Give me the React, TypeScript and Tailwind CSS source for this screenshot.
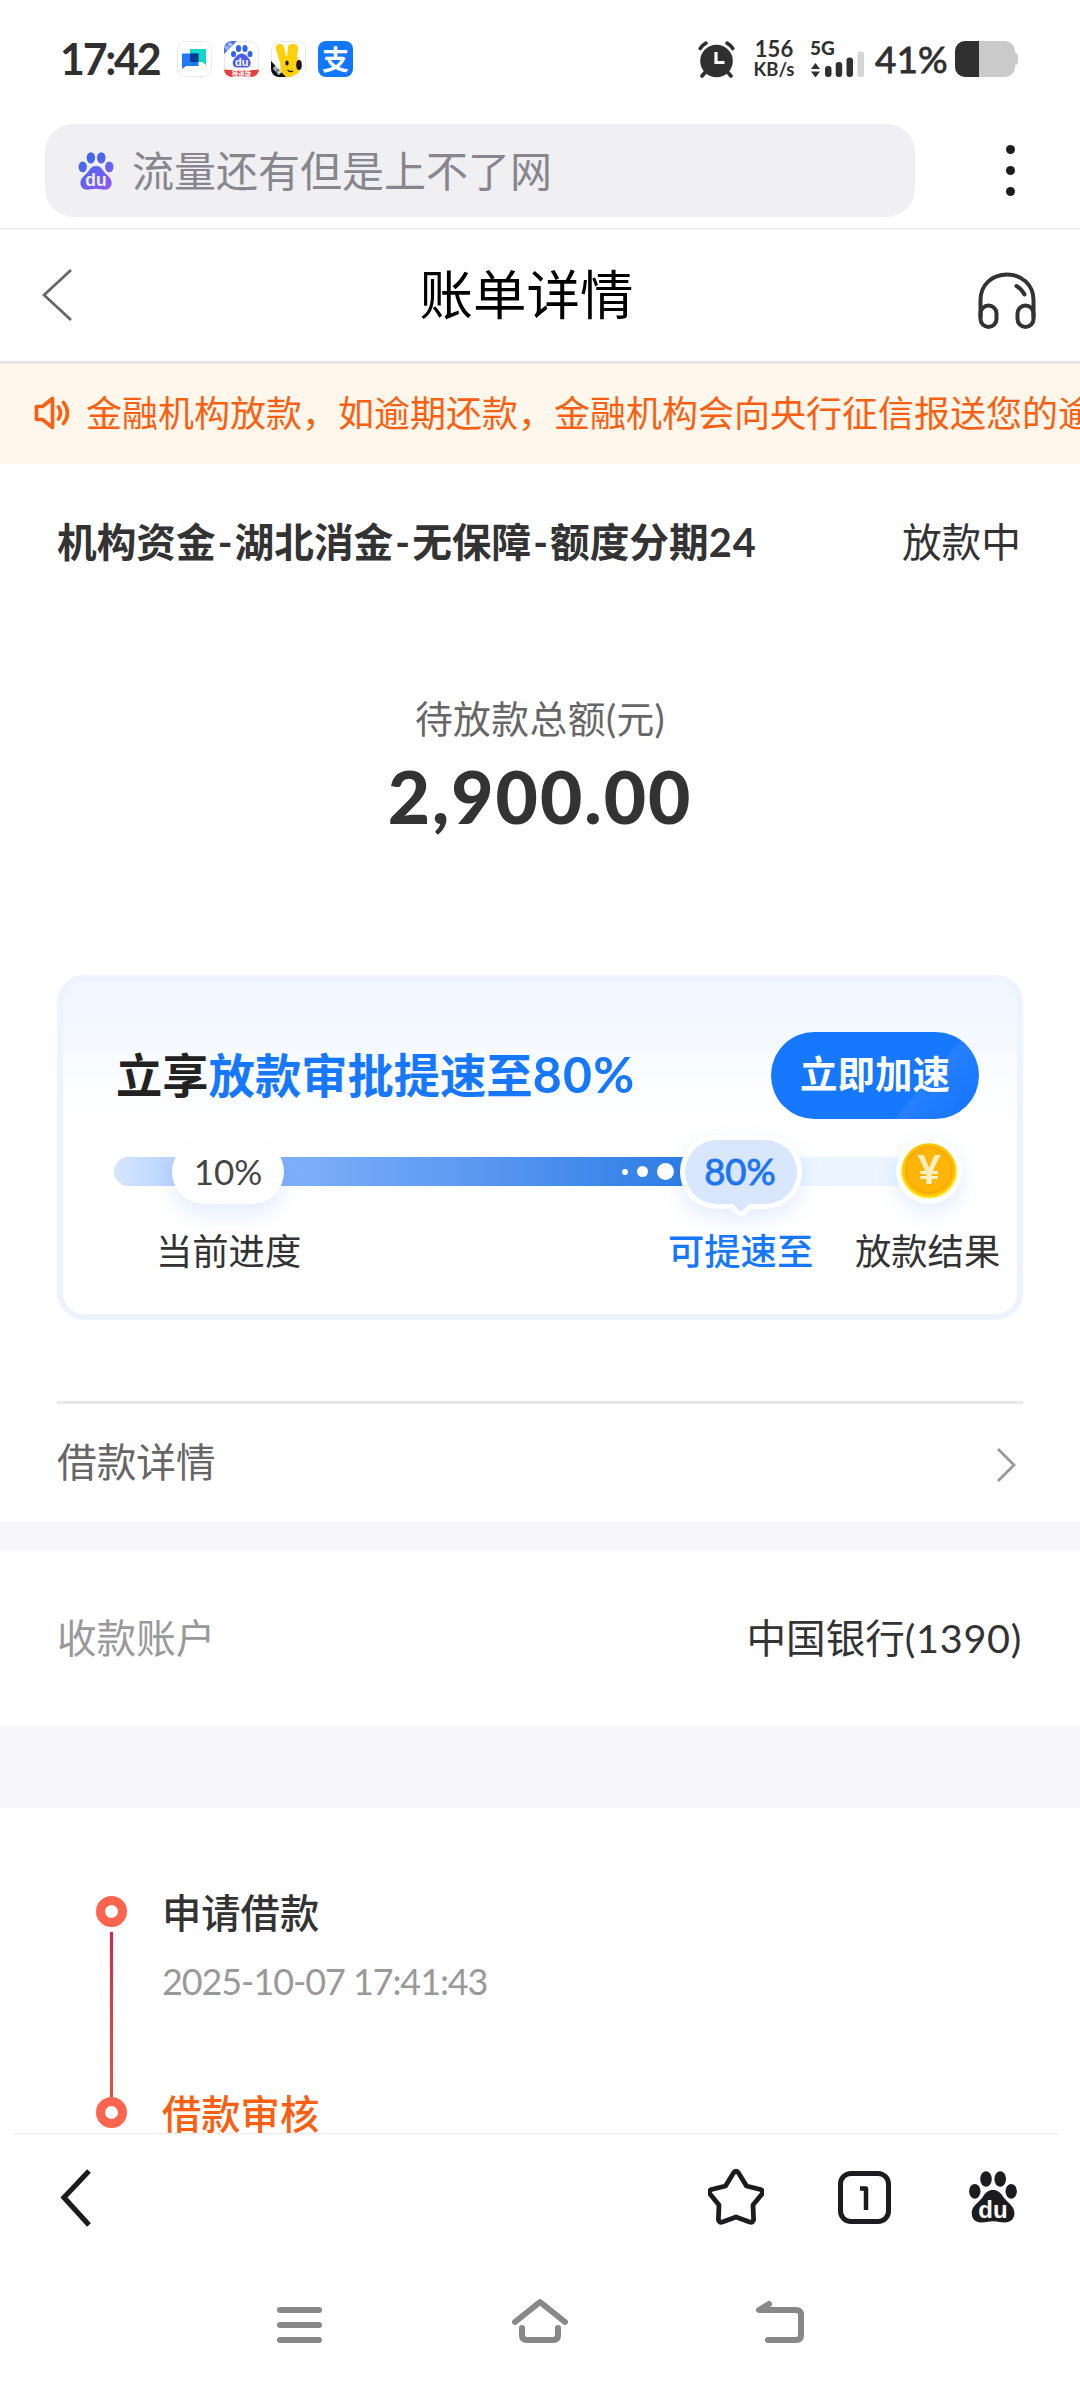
import React from "react";

const FONT = "font-[Lato,'Noto_Sans_CJK_SC',sans-serif]";

function Paw({ fill, ink, className }: { fill: string; ink: string; className: string }) {
  return (
    <svg viewBox="0 0 48 52" className={className} fill={fill}>
      <defs>
        <linearGradient id="pawBlue" x1="0" y1="0" x2="38" y2="60" gradientUnits="userSpaceOnUse">
          <stop offset="0.2" stopColor="#4169ee" />
          <stop offset="1" stopColor="#9a55f2" />
        </linearGradient>
      </defs>
      <ellipse cx="17" cy="8" rx="5.8" ry="7.8" />
      <ellipse cx="31.2" cy="8" rx="5.8" ry="7.8" />
      <ellipse cx="5.8" cy="20.3" rx="5.7" ry="7.4" />
      <ellipse cx="42.2" cy="20.3" rx="5.7" ry="7.4" />
      <path d="M24 19c4.500 0 7.500 2.500 10 6.500 3.500 5.500 11.400 9 11.400 16.500 0 6-4 9.500-9.400 9.500-4.500 0-7-1.300-12-1.300s-7.500 1.300-12 1.300c-5.400 0-9.300-3.500-9.300-9.500 0-7.500 8-11 11.400-16.500 2.400-4 5.400-6.500 9.900-6.500z" />
      <text x="24" y="46.500" textAnchor="middle" fontFamily="Liberation Sans" fontWeight="700" fontSize="24" fill={ink}>
        du
      </text>
    </svg>
  );
}

function StatusBar() {
  return (
    <div className="flex h-[117px] items-start justify-between pl-[60px] pr-[62px] pt-[41px] text-[#303030]">
      <div className="flex h-9 items-center">
        <span className="w-[117px] text-[43px] font-bold leading-9 tracking-[-2.3px]">17:42</span>
        <div className="flex gap-3">
          <svg viewBox="0 0 35 36" className="h-9 w-[35px]">
            <rect x="0.5" y="0.5" width="34" height="35" rx="8" fill="#fff" stroke="#e8ebee" />
            <path d="M13 8h16v16l-4-3H13z" fill="#14d6c8" />
            <path d="M5 12.500h16.500v12.500H9l-4 3z" fill="#1e7af5" />
            <rect x="13" y="12.500" width="8.500" height="8.500" fill="#063b8d" />
          </svg>
          <svg viewBox="0 0 35 36" className="h-9 w-[35px]">
            <clipPath id="appClipA"><rect width="35" height="36" rx="8" /></clipPath>
            <g clipPath="url(#appClipA)">
              <rect x="0.5" y="0.5" width="34" height="35" rx="8" fill="#fff" stroke="#e8ebee" />
              <g fill="#2f63ee">
                <ellipse cx="14.500" cy="7.500" rx="2.600" ry="3.500" />
                <ellipse cx="21" cy="7.500" rx="2.600" ry="3.500" />
                <ellipse cx="9.500" cy="13" rx="2.500" ry="3.100" />
                <ellipse cx="26" cy="13" rx="2.500" ry="3.100" />
                <path d="M17.700 12.500c4 0 9 6 9 9.500 0 3.200-2.300 4.500-5 4.500h-8c-2.700 0-5-1.300-5-4.500 0-3.500 5-9.500 9-9.500z" fill="#4a5cf0" />
              </g>
              <text x="17.800" y="24.500" textAnchor="middle" fontFamily="Liberation Sans" fontWeight="700" fontSize="11" fill="#fff">du</text>
              <path d="M0 0h13L0 13z" fill="#4a72ee" />
              <text transform="translate(2.200 9.500) rotate(-45)" fontFamily="Noto Sans CJK SC" fontSize="4.500" fill="#fff">百度</text>
              <path d="M0 28.500q17.500 2 35 0V36H0z" fill="#ea3e3e" />
              <text x="17.500" y="35" textAnchor="middle" fontFamily="Noto Sans CJK SC" fontWeight="700" fontSize="6.300" fill="#fff">極速版</text>
            </g>
          </svg>
          <svg viewBox="0 0 35 36" className="h-9 w-[35px]">
            <clipPath id="appClipB"><rect width="35" height="36" rx="8" /></clipPath>
            <g clipPath="url(#appClipB)">
              <rect x="0.5" y="0.5" width="34" height="35" rx="8" fill="#fff" stroke="#e8ebee" />
              <path d="M5 8C4 2 11 1 13 6l2 9h1l1-9c1-5 10-4 10 1l-1 10c5 4 5 11 0 16l-9 4H7c3-5 3-9 2-15z" fill="#ffd00a" />
              <ellipse cx="28" cy="24" rx="2.800" ry="5" fill="#161616" />
              <ellipse cx="16" cy="22" rx="1.700" ry="2.600" fill="#161616" />
              <path d="M16.500 29q2.500 2.500 5.500 1" fill="none" stroke="#161616" strokeWidth="1.200" />
              <path d="M0 20l15 16H0z" fill="#111" />
              <text transform="translate(1.800 27) rotate(47)" fontFamily="Noto Sans CJK SC" fontWeight="700" fontSize="4.800" fill="#fff">极速</text>
            </g>
          </svg>
          <div className="flex h-9 w-[35px] items-center justify-center rounded-lg bg-[#1277ff] text-[27px] font-bold leading-none text-white">支</div>
        </div>
      </div>
      <div className="flex h-9 items-center">
        <svg viewBox="0 0 37 37" className="h-[37px] w-[37px]">
          <circle cx="18.500" cy="20" r="16.300" fill="#303030" />
          <path d="M2.200 7.500Q4.500 4 8 2.200M34.800 7.500Q32.500 4 29 2.200M7 31.500l-3 3.500M30 31.500l3 3.500" stroke="#303030" strokeWidth="3.600" strokeLinecap="round" fill="none" />
          <path d="M18 11v10.500h8.500" stroke="#fff" strokeWidth="3.200" fill="none" />
        </svg>
        <div className="ml-[17px] flex w-[44px] flex-col items-center font-bold">
          <span className="h-[19px] text-[22px] leading-[16px]">156</span>
          <span className="h-[17px] text-[18.500px] leading-[18px]">KB/s</span>
        </div>
        <div className="ml-[14px] flex h-9 w-[56px] flex-col">
          <span className="h-[10px] text-[19px] font-black leading-[14px]">5G</span>
          <svg viewBox="0 0 56 26" className="h-[26px] w-14">
            <path d="M1 18l4.500-6 4.500 6zM1 20.500h9l-4.500 6z" fill="#303030" />
            <g fill="#303030">
              <rect x="15" y="15" width="6.500" height="11" rx="3" />
              <rect x="25.700" y="11" width="6.500" height="15" rx="3" />
              <rect x="36.500" y="6.500" width="6.500" height="19.500" rx="3" />
            </g>
            <rect x="47.500" y="0.500" width="6.500" height="25.500" rx="2.500" fill="#d4d4d4" />
          </svg>
        </div>
        <span className="ml-[9px] w-[76px] text-[37px] leading-9 [-webkit-text-stroke:0.8px]">41%</span>
        <div className="ml-1 flex items-center">
          <div className="h-9 w-[60px] overflow-hidden rounded-[10px] bg-[#cacaca]">
            <div className="h-9 w-6 bg-[#303030]" />
          </div>
          <div className="h-3 w-[3px] rounded-r bg-[#cacaca]" />
        </div>
      </div>
    </div>
  );
}

function SearchBar() {
  return (
    <div className="flex h-[112px] items-start border-b border-[#e3e3e5] pl-[45px] pt-[7px]">
      <div className="flex h-[93px] w-[870px] items-center rounded-[28px] bg-[#f0f0f3] pl-[33px]">
        <Paw fill="url(#pawBlue)" ink="#f0f0f3" className="h-[38px] w-9" />
        <span className="ml-[18px] text-[42px] leading-[60px] text-[#87868f]">流量还有但是上不了网</span>
      </div>
      <div className="ml-[91px] flex h-[93px] flex-col items-center justify-center gap-3">
        <i className="h-[9px] w-[9px] rounded-full bg-[#1c1c1f]" />
        <i className="h-[9px] w-[9px] rounded-full bg-[#1c1c1f]" />
        <i className="h-[9px] w-[9px] rounded-full bg-[#1c1c1f]" />
      </div>
    </div>
  );
}

function Header() {
  return (
    <div className="flex h-[135px] items-center justify-between border-b-[3px] border-[#e6e6e6] pl-[42px] pr-[44px]">
      <svg viewBox="0 0 30 54" className="h-[54px] w-[30px]" fill="none" stroke="#666" strokeWidth="2.800">
        <path d="M29 2L2 27l27 25" />
      </svg>
      <h1 className="mt-[-2px] ml-[3px] text-[53.500px] leading-[72px] text-black">账单详情</h1>
      <svg viewBox="0 0 58 57" className="mt-2.5 h-[57px] w-[58px]" fill="none" stroke="#333" strokeWidth="4" strokeLinecap="round">
        <path d="M2.500 45V28C2.500 13 14 2.500 29 2.500S55.500 13 55.500 28v17" />
        <rect x="2.500" y="33.500" width="16" height="21.500" rx="8" />
        <rect x="39.500" y="33.500" width="16" height="21.500" rx="8" />
        <path d="M38.500 14q5 3 8 8.500" strokeWidth="4" />
      </svg>
    </div>
  );
}

function Notice() {
  return (
    <div className="flex h-[100px] items-center overflow-hidden bg-[#fff7ec] pb-[3px] pl-[34px] text-[#fa5f12]">
      <svg viewBox="0 0 36 34" className="h-[34px] w-9 shrink-0" fill="none" stroke="currentColor" strokeWidth="3.600" strokeLinejoin="round" strokeLinecap="round">
        <path d="M2.500 10.500h6L18.500 2.500v29l-10-8h-6z" />
        <path d="M24.500 11q4 6 0 12M29.500 6.500q8 10.500 0 21" />
      </svg>
      <span className="ml-4 whitespace-nowrap text-[36px] leading-[50px]">金融机构放款，如逾期还款，金融机构会向央行征信报送您的逾</span>
    </div>
  );
}

function SpeedCard() {
  return (
    <section className="mx-[57px] mt-[138px] flex h-[345px] flex-col rounded-[27px] border-[6px] border-[#eef4ff] bg-linear-to-b from-[#eef6ff] to-white to-[135px]">
      <div className="flex items-start justify-between pl-[53px] pr-[38px] pt-[51px]">
        <h2 className="flex h-[85px] items-center text-[46.300px] font-bold leading-[60px] text-[#222]">
          立享<span className="text-[#1677ff]">放款审批提速至<span className="text-[50px] tracking-[1.300px]">80%</span></span>
        </h2>
        <button className="flex h-[87px] w-[208px] items-center justify-center rounded-full bg-[linear-gradient(130deg,#1677ff_70%,#2880ff_70%,#1677ff_92%)] pb-0.5 text-[37.500px] font-bold text-white">
          立即加速
        </button>
      </div>
      <div className="relative mt-[38px] h-[29px]">
        <div className="ml-[51px] flex h-[29px] w-[816px] overflow-hidden rounded-full bg-[#ebf5ff]">
          <div className="flex w-[572px] items-center justify-end gap-[9px] bg-linear-to-r from-[#d6e6fe] via-[#7fb0fb] via-30% to-[#2b7de6] pr-[12px]">
            <i className="h-1.5 w-1.5 rounded-full bg-white" />
            <i className="h-[11px] w-[11px] rounded-full bg-white" />
            <i className="h-[17px] w-[17px] rounded-full bg-white" />
          </div>
        </div>
        <div className="absolute left-[109px] top-[-17px] flex h-16 w-[112px] items-center justify-center rounded-full bg-white pb-0.5 text-[35px] leading-none text-[#444] shadow-[0_12px_20px_rgba(22,100,255,0.10)]">
          10%
        </div>
        <svg viewBox="0 0 150 110" className="absolute left-[603px] top-[-37px] h-[110px] w-[150px] overflow-visible drop-shadow-[0_8px_10px_rgba(22,100,255,0.12)]">
          <path d="M51 20h48a32 32 0 0 1 0 64H83l-8 8-8-8H51a32 32 0 0 1 0-64z" fill="#d8e7fd" stroke="#fff" strokeWidth="10" strokeLinejoin="round" paintOrder="stroke" />
        </svg>
        <div className="absolute left-[621px] top-[-17px] flex h-16 w-[112px] items-center justify-center pb-0.5 text-[36.500px] leading-none text-[#1f74f2] [-webkit-text-stroke:0.9px]">80%</div>
        <svg viewBox="0 0 68 68" className="absolute left-[832px] top-[-20px] h-[68px] w-[68px] overflow-visible drop-shadow-[0_8px_10px_rgba(22,100,255,0.12)]">
          <circle cx="34" cy="34" r="33" fill="#fff" />
          <ellipse cx="34" cy="34.500" rx="28" ry="27" fill="#ffec2e" />
          <circle cx="34" cy="33" r="26.700" fill="#ffc400" />
          <circle cx="34" cy="33" r="23" fill="#ffb508" stroke="#f5a30c" strokeWidth="1.500" />
          <text x="34" y="47" textAnchor="middle" fontFamily="Lato" fontWeight="900" fontSize="39" fill="#fff0c4">¥</text>
        </svg>
      </div>
      <div className="mt-[40px] flex whitespace-nowrap text-[36.300px] leading-[50px] text-[#333]">
        <span className="ml-[93px] w-[146px]">当前进度</span>
        <span className="ml-[366px] w-[146px] font-medium text-[#1677ff]">可提速至</span>
        <span className="ml-[41px] w-[146px] shrink-0">放款结果</span>
      </div>
    </section>
  );
}

function Node() {
  return <div className="h-[31px] w-[31px] shrink-0 rounded-full border-[9px] border-[#ff644e] bg-white" />;
}

function Timeline() {
  return (
    <section className="flex h-[325px] overflow-hidden pl-24 pt-[88px]">
      <div className="flex flex-col items-center">
        <Node />
        <div className="mt-[5px] h-[165px] w-[3px] shrink-0 bg-linear-to-b from-[#e01f48] to-[#e2523f]" />
        <Node />
      </div>
      <div className="ml-[35px] flex flex-col">
        <span className="mt-[-13px] text-[39.300px] font-medium leading-[60px] text-[#333]">申请借款</span>
        <span className="mt-[16px] text-[36px] leading-[44px] tracking-[-1.100px] text-[#999]">2025-10-07 17:41:43</span>
        <span className="mt-[81px] h-[60px] text-[39.300px] font-medium leading-[60px] text-[#fa5f12]">借款审核</span>
      </div>
    </section>
  );
}

function BrowserBar() {
  return (
    <div className="relative flex h-[131px] items-start pl-[60px] pt-[36px] text-[#1c1c1f]">
      <div className="absolute left-[13px] right-[21px] top-0 h-px bg-[#ebebeb]" />
      <svg viewBox="0 0 32 58" className="h-[58px] w-8" fill="none" stroke="currentColor" strokeWidth="5.200">
        <path d="M29 2L4 28.500 29 56" />
      </svg>
      <svg viewBox="0 0 56 56" className="ml-[616px] h-14 w-14" fill="none" stroke="currentColor" strokeWidth="4.800" strokeLinejoin="round">
        <path d="M25.300 4.200q2.700-4 5.400 0L38.500 17l14 3.500q3.500 1.500 1.500 4.500L45 36l.6 14.500q-.6 3.500-4 2.500L28 48 14.400 53q-3.400 1-4-2.500L11 36 2 25q-2-3 1.500-4.500l14-3.500z" />
      </svg>
      <div className="ml-[74px] mt-[2px] flex h-[53px] w-[53px] items-center justify-center rounded-[13px] border-[5px] border-current">
        <svg viewBox="0 0 9 24" className="-ml-px h-6 w-[9px]" fill="none" stroke="currentColor" strokeWidth="4.500" strokeLinejoin="round">
          <path d="M0 2.500h6V24" />
        </svg>
      </div>
      <Paw fill="#1c1c1f" ink="#fff" className="ml-[78px] mt-[2px] h-[52px] w-12" />
    </div>
  );
}

function NavBar() {
  return (
    <div className="flex flex-1 items-start justify-center gap-[184px] pt-8 text-[#888]">
      <svg viewBox="0 0 56 50" className="h-[50px] w-14" fill="none" stroke="currentColor" strokeWidth="6" strokeLinecap="round">
        <path d="M8 14h39M8 29h39M8 44h39" />
      </svg>
      <svg viewBox="0 0 56 50" className="h-[50px] w-14" fill="none" stroke="currentColor" strokeWidth="6" strokeLinecap="round" strokeLinejoin="round">
        <path d="M3 26L28 6l25 20M10 32v7q0 5 5 5h26q5 0 5-5v-7" />
      </svg>
      <svg viewBox="0 0 56 50" className="h-[50px] w-14" fill="none" stroke="currentColor" strokeWidth="6" strokeLinecap="round" strokeLinejoin="round">
        <path d="M17 8L7 14h37q5 0 5 5v20q0 5-5 5H16" />
      </svg>
    </div>
  );
}

function Dash() {
  return <span className="px-0.5">-</span>;
}

export default function App() {
  return (
    <main className={`flex h-[2388px] w-[1080px] flex-col overflow-hidden bg-white ${FONT}`}>
      <StatusBar />
      <SearchBar />
      <Header />
      <Notice />
      <div className="flex h-[156px] items-center justify-between pl-[57px] pr-[59px] text-[39.700px] leading-[60px] text-[#333]">
        <span className="font-bold">
          机构资金<Dash />湖北消金<Dash />无保障<Dash />额度分期<span className="tracking-[1px]">24</span>
        </span>
        <span>放款中</span>
      </div>
      <div className="mt-[74px] flex flex-col items-center">
        <span className="text-[37.800px] leading-[50px] tracking-[0.400px] text-[#666]">待放款总额(元)</span>
        <span className="mt-[9px] h-[84px] text-[73px] font-black leading-[86px] tracking-[2px] text-[#333]">2,900.00</span>
      </div>
      <SpeedCard />
      <div className="mx-[57px] mt-[81px] flex h-[121px] items-center justify-between border-t-[3px] border-[#e8e8e8] pr-[7px] text-[39.700px] leading-[60px] text-[#666]">
        <span className="-mt-0.5">借款详情</span>
        <svg viewBox="0 0 20 36" className="mt-1 h-9 w-5" fill="none" stroke="#999" strokeWidth="2.800">
          <path d="M2 2l16 16L2 34" />
        </svg>
      </div>
      <div className="h-[29px] bg-[#f7f7fa]" />
      <div className="flex h-[175px] items-center justify-between pb-0.5 pl-[57px] pr-[58px] text-[39.600px] leading-[60px]">
        <span className="text-[#999]">收款账户</span>
        <span className="text-[#333]">中国银行<span className="tracking-[0.700px]">(1390)</span></span>
      </div>
      <div className="h-[82px] bg-[#f7f7fa]" />
      <Timeline />
      <BrowserBar />
      <NavBar />
    </main>
  );
}
